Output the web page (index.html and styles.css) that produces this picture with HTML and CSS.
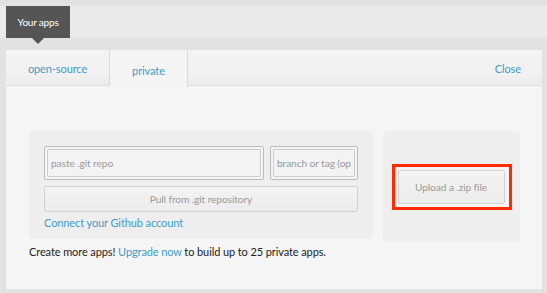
FILE: index.html
```html
<!DOCTYPE html>
<html>
<head>
<meta charset="utf-8">
<link rel="stylesheet" href="styles.css">
</head>
<body>
<div class="topband">
  <div class="apps-label">Your apps</div>
</div>
<div class="panel">
  <div class="tabbar">
    <div class="tab">open-source</div>
    <div class="tab active">private</div>
    <div class="spacer"></div>
    <a class="close">Close</a>
  </div>
  <div class="content">
    <div class="boxes">
      <div class="box git">
        <div class="row">
          <div class="field wide"><input class="inp" placeholder="paste .git repo"></div>
          <div class="field narrow"><input class="inp" placeholder="branch or tag (optional)"></div>
        </div>
        <div class="btn pull">Pull from .git repository</div>
        <a class="link connect">Connect your Github account</a>
      </div>
      <div class="box zip">
        <div class="highlight">
          <div class="btn upload">Upload a .zip file</div>
        </div>
      </div>
    </div>
    <p class="more">Create more apps! <a class="link">Upgrade now</a> to build up to 25 private apps.</p>
  </div>
</div>
</body>
</html>
```
FILE: styles.css
```css
html, body {
  margin: 0;
  padding: 0;
}
body {
  width: 547px;
  height: 293px;
  overflow: hidden;
  background: #e2e2e2;
  font-family: Lato, "Liberation Sans", sans-serif;
  font-size: 11px;
  letter-spacing: -0.1px;
  color: #222;
}
.topband {
  margin-top: 6px;
  height: 32px;
  background: #eaeaea;
  position: relative;
}
.apps-label {
  position: absolute;
  left: 6px;
  top: 0;
  width: 64px;
  height: 32px;
  background: #555555;
  color: #fff;
  font-size: 10px;
  line-height: 32px;
  text-align: center;
  letter-spacing: -0.2px;
}
.apps-label::after {
  content: "";
  position: absolute;
  left: 26px;
  bottom: -6px;
  border-left: 6px solid transparent;
  border-right: 6px solid transparent;
  border-top: 6px solid #555555;
}
.panel {
  margin: 12px 5px 0 6px;
  height: 239px;
  background: #f5f5f5;
  display: flex;
  flex-direction: column;
}
.tabbar {
  height: 35px;
  display: flex;
  align-items: stretch;
  background: linear-gradient(#f3f3f3, #f1f1f1 70%, #ebebeb);
  border-bottom: 1px solid #dedede;
}
.tab {
  width: 103px;
  border-right: 1px solid #dadada;
  display: flex;
  align-items: center;
  justify-content: center;
  color: #3e9cc6;
  padding-top: 1px;
}
.tab.active {
  width: 77px;
  background: #f4f4f4;
  margin-bottom: -2px;
  padding-top: 3px;
  border-right: 1px solid #dadada;
}
.spacer { flex: 1; }
.close {
  align-self: center;
  color: #3e9cc6;
  margin-right: 21px;
  padding-top: 1px;
}
.content {
  padding: 45px 22px 0 23px;
}
.boxes {
  display: flex;
  gap: 10px;
  align-items: flex-start;
}
.box {
  background: #eeeeee;
  border-radius: 4px;
}
.git {
  width: 344px;
  height: 108px;
  padding: 15px 15px 0 15px;
  box-sizing: border-box;
  display: flex;
  flex-direction: column;
}
.row {
  display: flex;
  gap: 6px;
}
.field {
  border: 1px solid #bcbcbc;
  border-radius: 2px;
  padding: 2px;
  background: #f5f5f5;
}
.field.wide { width: 214px; }
.field.narrow { width: 82px; }
.inp {
  display: block;
  width: 100%;
  height: 28px;
  box-sizing: border-box;
  border: 1px solid #cfcfcf;
  border-radius: 1px;
  background: #f3f3f3;
  font-family: inherit;
  font-size: 10.2px;
  letter-spacing: -0.1px;
  padding: 0 3px;
  color: #555;
  outline: none;
}
.inp::placeholder { color: #9a9a9a; }
.btn {
  border: 1px solid #d3d3d3;
  border-radius: 2px;
  background: linear-gradient(#f3f3f3, #ececec);
  color: #9a9a9a;
  font-size: 10.2px;
  display: flex;
  align-items: center;
  justify-content: center;
  box-sizing: border-box;
}
.pull {
  margin-top: 6px;
  height: 26px;
}
.link {
  color: #3e9cc6;
}
.connect {
  margin-top: 3px;
  line-height: 16px;
  font-size: 11px;
}
.zip {
  width: 137px;
  height: 111px;
  display: flex;
  align-items: center;
  justify-content: center;
}
.highlight {
  border: 3px solid #ff2a00;
  padding: 3px 4px 3px 3px;
  background: #f4f4f4;
}
.upload {
  width: 107px;
  height: 34px;
}
.more {
  margin: 3px 0 0 0;
  line-height: 14px;
}
```
